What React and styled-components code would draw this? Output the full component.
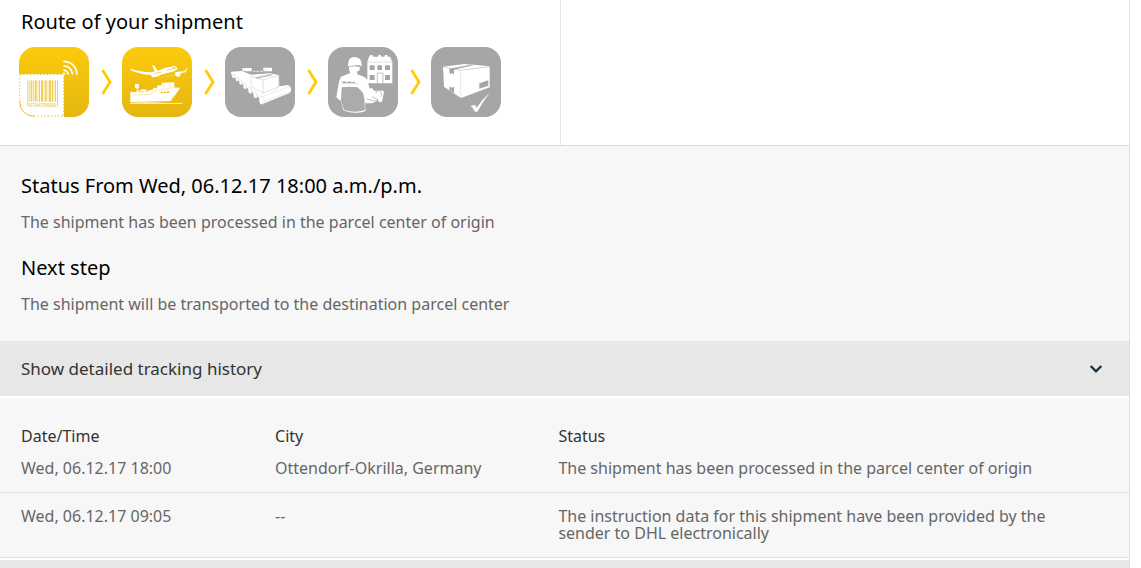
import React from "react";
import styled, { createGlobalStyle } from "styled-components";

const GlobalStyle = createGlobalStyle`
  * { box-sizing: border-box; }
  body {
    margin: 0;
    background: #fff;
    color: #000;
    font-family: "Noto Sans", "Open Sans", sans-serif;
    font-size: 16px;
    line-height: 17px;
  }
`;

const Page = styled.main`
  margin-right: 11px;
  border-right: 1px solid #e0e0e0;
`;

const Top = styled.section`
  display: flex;
  border-bottom: 1px solid #dcdcdc;
`;

const Route = styled.div`
  flex: 0 0 auto;
  width: 561px;
  padding: 8px 20px 28px 21px;
  border-right: 1px solid #e6e6e6;
`;

const Heading = styled.h2`
  margin: 0;
  font-size: 20px;
  line-height: 27px;
  font-weight: 400;
`;

const Steps = styled.ol`
  display: flex;
  align-items: center;
  margin: 12px 0 0 -2px;
  padding: 0;
  list-style: none;
`;

const Step = styled.li`
  display: flex;
  align-items: center;
`;

const StepIcon = styled.svg`
  display: block;
  width: 70px;
  height: 70px;
  border-radius: 16px;
  background: ${(p) => (p.$done ? "linear-gradient(#fccb0c, #e4b611)" : "#a6a6a6")};
`;

const Arrow = styled.svg`
  display: block;
  width: 11px;
  height: 26px;
  margin: 0 10px 0 12px;
`;

const Summary = styled.section`
  padding: 26px 21px 28px;
  background: #f7f7f7;
`;

const SummaryText = styled.p`
  margin: 15px 0 23px;
  color: #666;

  &:last-child { margin-bottom: 0; }
`;

const HistoryToggle = styled.button`
  display: flex;
  align-items: center;
  justify-content: space-between;
  width: 100%;
  height: 55px;
  padding: 0 26px 0 21px;
  border: 0;
  background: #e7e7e7;
  color: #333;
  font: inherit;
  font-size: 17px;
  text-align: left;
  cursor: pointer;
`;

const Chevron = styled.svg`
  width: 14px;
  height: 10px;
`;

const History = styled.table`
  width: 100%;
  margin: 2px 0;
  border-collapse: collapse;
  table-layout: fixed;
  background: #f7f7f7;
`;

const Col = styled.col`
  width: ${(p) => p.$width};
`;

const HeadCell = styled.th`
  padding: 30px 0 0 21px;
  color: #333;
  font-weight: 400;
  text-align: left;
`;

const Cell = styled.td`
  padding: 15px 40px 15px 21px;
  border-bottom: 1px solid #e0e0e0;
  color: #666;
  vertical-align: top;

  &:nth-child(2) { padding-right: 0; }
`;

const Footer = styled.footer`
  height: 8px;
  background: #e7e7e7;
`;

const BAR_COLUMNS = [
  [40, 3], [45, 2], [50, 5], [58, 2], [62, 6], [71, 2], [75, 3], [81, 6], [89, 2],
  [93, 5], [101, 2], [105, 6], [113, 4], [119, 2], [123, 3], [129, 3],
];

const BarcodeIcon = () => (
  <>
    <path d="M15 96H150V225H15Z" fill="#fff" />
    <path d="M18 97H149V222H64" fill="none" stroke="#e9bd1c" strokeWidth="3" strokeDasharray="4 6" />
    <path d="M17 98V176" fill="none" stroke="#efc43a" strokeWidth="3" strokeDasharray="4 6" />
    <path d="M17 176Q18 222 64 223" fill="none" stroke="#e9bd1c" strokeWidth="3" />
    {BAR_COLUMNS.map(([x, w]) => (
      <rect key={x} x={x} y="115" width={w} height={x === 40 || x === 129 ? 78 : 64} fill="#f4d153" />
    ))}
    <text x="45" y="194" fontSize="15" fontFamily="Liberation Mono, monospace" fill="#e9be22">978435698</text>
    <g fill="none" stroke="#fff" strokeWidth="5">
      <path d="M148 58Q186 60 189 98" />
      <path d="M148 71Q173 73 176 98" />
      <path d="M148 84Q161 86 163 98" />
    </g>
    <path d="M148 91Q154 92 155 98H148Z" fill="#fff" />
  </>
);

const TransportIcon = () => (
  <>
    <g fill="#fff">
      <path d="M39 79Q61 90 106 91L113 87L105 69L110 70L123 86Q145 75 171 72Q180 73 181 81Q175 88 160 91L136 97Q118 107 106 106L101 99Q60 95 42 85Z" />
      <path d="M176 90L202 88L209 78L211 79L206 91L191 93Q192 103 183 105Q175 104 174 97Z" />
      <path d="M40 149L59 151V139L54 138V126H66V139H62V148L78 142L90 143L87 151L98 144L108 143V139L120 137V131L134 130V122L172 121V136L190 137L162 177L40 180Z" />
      <path d="M39 182Q80 178 118 181T196 182V186H39Z" opacity="0.7" />
    </g>
    <g fill="none" stroke="#edc016">
      <path d="M108 92L102 99M139 121V139M159 122V136M120 132V143M46 160L100 157L111 148L169 137L187 138" strokeWidth="1" />
      <path d="M112 95L133 90M150 84L176 79M165 77L176 76M66 149H82M162 177L169 160" strokeWidth="2" />
    </g>
    <path d="M126 107L175 98M165 162L166 182" fill="none" stroke="#fff" strokeWidth="1" strokeDasharray="3 2" />
    <path d="M132 149H138L136 153H130ZM141 149H147L145 153H139ZM150 148H158L156 152H148Z" fill="#ebbb10" />
  </>
);

const ConveyorIcon = () => (
  <>
    <g fill="#fff">
      <path d="M67 78H95V88H67ZM130 77H156V88H130Z" />
      <path d="M33 89L65 87L94 98L149 94L177 99L178 133L204 129Q214 132 213 147L209 153L128 186Q118 184 119 169L34 98Z" />
      <ellipse cx="41" cy="102" rx="5" ry="6" />
      <ellipse cx="52" cy="111" rx="5" ry="7" />
      <ellipse cx="63" cy="121" rx="5" ry="8" />
      <ellipse cx="76" cy="132" rx="6" ry="9" />
      <ellipse cx="91" cy="145" rx="6" ry="10" />
      <ellipse cx="107" cy="157" rx="7" ry="11" />
      <ellipse cx="126" cy="173" rx="8" ry="14" />
    </g>
    <g fill="none" stroke="#a6a6a6" strokeWidth="1">
      <path d="M93 103L129 114V153L94 134ZM129 114L176 100V135L129 153" />
      <path d="M108 109L157 98" strokeWidth="3" />
      <path d="M103 106L149 97" />
      <path d="M73 76V88M137 76V88" />
      <path d="M37 97Q45 97 46 106M48 105Q56 105 56 116M59 113Q68 114 67 127M71 123Q81 125 80 139M86 135Q96 136 95 152M101 147Q112 149 111 165M119 162Q132 162 133 176Q132 184 127 187" />
      <path d="M135 161L207 134M137 177L211 149" strokeDasharray="5 3" />
    </g>
    <path d="M98 88H130" stroke="#fff" strokeWidth="2" strokeDasharray="8 3" />
  </>
);

const DeliveryIcon = () => (
  <>
    <path d="M138 44L142 39H148L151 44H165L167 39H173L175 44H184L186 39H192L195 44H201L208 60V124H133V60Z" fill="#fff" />
    <path d="M133 60H208" stroke="#d0d0d0" strokeWidth="2" />
    <path d="M140 70H155V84H140ZM163 70H177V84H163ZM186 70H201V84H186ZM140 99H155V114H140ZM186 99H201V114H186Z" fill="#a6a6a6" />
    <path d="M163 123V93H180V123M175 107V110" fill="none" stroke="#a6a6a6" strokeWidth="2" />
    <g fill="#fff">
      <path d="M75 68Q75 46 94 45Q113 46 115 61L117 72L107 69L76 74Z" />
      <path d="M78 75Q94 70 112 75L110 86L103 89V97L123 104L134 113L145 169L135 177L125 169L128 207Q94 219 61 205L54 178L40 166L48 119L54 104L82 93Q77 86 78 75Z" />
      <path d="M132 139H148L153 146H181L183 151L177 179L169 181L164 177L146 184H130L124 180Z" />
    </g>
    <path d="M76 75Q93 67 115 73M111 75L110 86L100 90" fill="none" stroke="#a6a6a6" strokeWidth="1.5" />
    <path d="M56 136Q82 132 104 136L120 152L124 170L126 204Q94 215 63 203L54 176Z" fill="#ababab" />
    <path d="M54 120L66 118M55 125H104" stroke="#bbb" strokeWidth="1.5" />
    <path d="M61 119H71L68 123H58ZM74 119H87L84 123H71ZM90 119H97L94 123H87Z" fill="#9d9d9d" />
    <path d="M131 171L169 180M147 163L166 174M170 147L177 157L174 164" fill="none" stroke="#a6a6a6" strokeWidth="2" />
    <path d="M158 153L162 148M160 178L165 173" stroke="#999" strokeWidth="3" />
  </>
);

const DeliveredIcon = () => (
  <>
    <path d="M51 74L116 66L191 73V136L105 168L54 134Z" fill="#fff" />
    <path d="M53 75L102 85L190 74" fill="none" stroke="#a6a6a6" strokeWidth="1.5" />
    <path d="M103 86L105 167" fill="none" stroke="#bbb" strokeWidth="1" />
    <path d="M70 80L132 68L143 70L84 83V98L78 94L71 96ZM70 133L76 137L84 135V153L70 144ZM160 124L187 115V131L160 140Z" fill="#a6a6a6" />
    <path d="M81 79L138 70" stroke="#ddd" strokeWidth="1" />
    <path d="M134 193L146 188L152 197Q169 171 191 152Q171 178 154 209H147Q143 198 134 193Z" fill="#fff" />
  </>
);

const STEPS = [
  { label: "Announced", done: true, Icon: BarcodeIcon },
  { label: "In transport", done: true, Icon: TransportIcon },
  { label: "Parcel center", done: false, Icon: ConveyorIcon },
  { label: "In delivery", done: false, Icon: DeliveryIcon },
  { label: "Delivered", done: false, Icon: DeliveredIcon },
];

const EVENTS = [
  {
    time: "Wed, 06.12.17 18:00",
    city: "Ottendorf-Okrilla, Germany",
    status: "The shipment has been processed in the parcel center of origin",
  },
  {
    time: "Wed, 06.12.17 09:05",
    city: "--",
    status: "The instruction data for this shipment have been provided by the sender to DHL electronically",
  },
];

export default function App() {
  return (
    <>
      <GlobalStyle />
      <Page>
        <Top>
          <Route>
            <Heading>Route of your shipment</Heading>
            <Steps>
              {STEPS.map(({ label, done, Icon }, i) => (
                <Step key={label}>
                  {i > 0 && (
                    <Arrow viewBox="0 0 11 26" aria-hidden="true">
                      <path d="M1.5 1L9 13L1.5 25" fill="none" stroke="#fc0" strokeWidth="2.8" />
                    </Arrow>
                  )}
                  <StepIcon $done={done} viewBox="15 15 210 210" role="img" aria-label={label}>
                    <Icon />
                  </StepIcon>
                </Step>
              ))}
            </Steps>
          </Route>
        </Top>
        <Summary>
          <Heading>Status From Wed, 06.12.17 18:00 a.m./p.m.</Heading>
          <SummaryText>The shipment has been processed in the parcel center of origin</SummaryText>
          <Heading>Next step</Heading>
          <SummaryText>The shipment will be transported to the destination parcel center</SummaryText>
        </Summary>
        <HistoryToggle type="button">
          Show detailed tracking history
          <Chevron viewBox="0 0 14 10" aria-hidden="true">
            <path d="M1.7 2L7 7.3L12.3 2" fill="none" stroke="#1d3440" strokeWidth="2.4" />
          </Chevron>
        </HistoryToggle>
        <History>
          <colgroup>
            <Col $width="22.5%" />
            <Col $width="25.1%" />
            <Col />
          </colgroup>
          <thead>
            <tr>
              <HeadCell scope="col">Date/Time</HeadCell>
              <HeadCell scope="col">City</HeadCell>
              <HeadCell scope="col">Status</HeadCell>
            </tr>
          </thead>
          <tbody>
            {EVENTS.map((event) => (
              <tr key={event.time}>
                <Cell>{event.time}</Cell>
                <Cell>{event.city}</Cell>
                <Cell>{event.status}</Cell>
              </tr>
            ))}
          </tbody>
        </History>
        <Footer />
      </Page>
    </>
  );
}
